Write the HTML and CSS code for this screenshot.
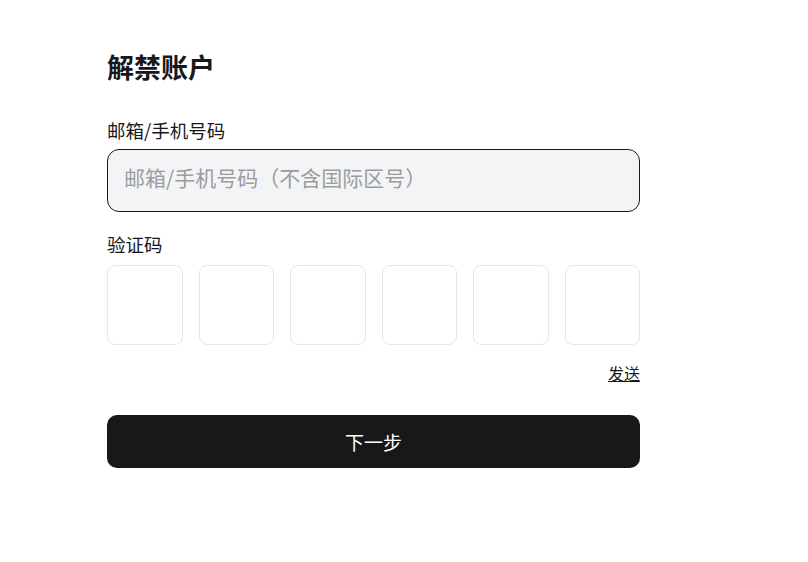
FILE: index.html
```html
<!DOCTYPE html>
<html lang="zh">
<head>
<meta charset="utf-8">
<link rel="stylesheet" href="styles.css">
</head>
<body>
<main class="page">
  <form class="card">
    <h1 class="title">解禁账户</h1>
    <label class="label" for="acct">邮箱/手机号码</label>
    <input class="input" id="acct" placeholder="邮箱/手机号码（不含国际区号）">
    <div class="label label-code">验证码</div>
    <div class="codes">
      <input class="code" maxlength="1">
      <input class="code" maxlength="1">
      <input class="code" maxlength="1">
      <input class="code" maxlength="1">
      <input class="code" maxlength="1">
      <input class="code" maxlength="1">
    </div>
    <div class="send-row"><a class="send" href="#">发送</a></div>
    <button type="button" class="submit">下一步</button>
  </form>
</main>
</body>
</html>
```

FILE: styles.css
```css
* { box-sizing: border-box; }
html, body { margin: 0; background: #ffffff; }
body {
  font-family: "Noto Sans CJK SC", "Noto Sans", sans-serif;
  color: #18181b;
}
.page {
  padding: 49px 0 0 107px;
}
.card {
  width: 533px;
  display: flex;
  flex-direction: column;
}
.title {
  margin: 0;
  font-size: 27px;
  font-weight: 700;
  line-height: 36px;
}
.label {
  font-size: 18.5px;
  line-height: 26px;
  margin-top: 32px;
  margin-bottom: 6px;
}
.label-code { margin-top: 19px; margin-bottom: 8px; }
.input {
  height: 63px;
  border: 1px solid #18181b;
  border-radius: 12px;
  background: #f3f4f6;
  padding: 0 16px 7px;
  font-family: inherit;
  font-size: 21px;
  color: #18181b;
  outline: none;
}
.input::placeholder { color: #9b9ca0; }
.codes {
  display: flex;
  gap: 16px;
}
.code {
  flex: 1;
  min-width: 0;
  height: 80px;
  border: 1px solid #e5e7eb;
  border-radius: 8px;
  background: #fff;
  outline: none;
}
.send-row {
  display: flex;
  justify-content: flex-end;
  margin-top: 16px;
}
.send {
  font-size: 16px;
  line-height: 24px;
  color: #18181b;
  text-decoration: underline;
}
.submit {
  margin-top: 30px;
  height: 53px;
  border: none;
  border-radius: 10px;
  background: #18181b;
  color: #fff;
  font-family: inherit;
  font-size: 19px;
}
```
